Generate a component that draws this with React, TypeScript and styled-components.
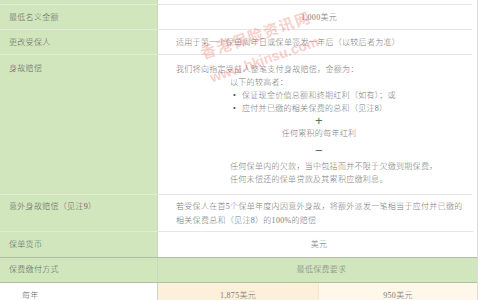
import React from "react";
import styled, { createGlobalStyle } from "styled-components";

const GREEN = "#d1e6bd";
const GREEN_LINE = "#e2ecd9";
const GREEN_DARK_LINE = "#aebfa2";
const GREY_LINE = "#e6e6e6";
const PEACH = "#fdf0da";
const PEACH_LIGHT = "#fef7ea";

const GlobalStyle = createGlobalStyle`
  html, body {
    margin: 0;
    padding: 0;
    background: #ffffff;
  }
  body {
    font-family: "Liberation Serif", "Noto Sans CJK SC", serif;
  }
`;

// Styled Components
const Sheet = styled.div`
  position: relative;
  width: 477px;
  height: 300px;
  overflow: hidden;
  border-right: 1px solid #dcdcdc;
  font-size: 8px;
  font-weight: 300;
  letter-spacing: 0.3px;
  line-height: 13px;
`;

const Row = styled.div<{ $cols?: string; $header?: boolean }>`
  display: grid;
  grid-template-columns: ${(p) => p.$cols ?? "158px 1fr"};
  background: ${(p) => (p.$header ? GREEN : "#ffffff")};
  border-top: ${(p) => (p.$header ? `1px solid ${GREEN_DARK_LINE}` : "none")};
  border-bottom: ${(p) => (p.$header ? `1px solid ${GREEN_DARK_LINE}` : "none")};
`;

const Label = styled.div<{ $pad?: string; $plain?: boolean; $noLine?: boolean; $lh?: number }>`
  box-sizing: border-box;
  background: ${(p) => (p.$plain ? "#ffffff" : GREEN)};
  color: #626262;
  padding: ${(p) => p.$pad ?? "6px 9px 5px"};
  line-height: ${(p) => p.$lh ?? 13}px;
  border-right: 1px solid #c9d9bb;
  border-bottom: ${(p) => (p.$noLine ? "none" : `1px solid ${GREEN_LINE}`)};
  white-space: nowrap;
`;

const Value = styled.div<{
  $align?: "left" | "center";
  $pad?: string;
  $noLine?: boolean;
  $lh?: number;
  $bg?: string;
  $full?: boolean;
}>`
  box-sizing: border-box;
  background: ${(p) => p.$bg ?? "#ffffff"};
  color: #7a7a7a;
  text-align: ${(p) => p.$align ?? "left"};
  padding: ${(p) => p.$pad ?? "6px 10px 5px 18px"};
  line-height: ${(p) => p.$lh ?? 13}px;
  margin-right: ${(p) => (p.$full ? 0 : 5)}px;
  border-bottom: ${(p) => (p.$noLine ? "none" : `1px solid ${GREY_LINE}`)};
  white-space: nowrap;
`;

const Line = styled.div<{ $indent?: number; $center?: boolean }>`
  padding-left: ${(p) => p.$indent ?? 0}px;
  text-align: ${(p) => (p.$center ? "center" : "left")};
`;

const Bullets = styled.ul`
  margin: 0;
  padding: 0 0 0 57px;
  list-style: none;
`;

const Bullet = styled.li`
  &::before {
    content: "•";
    display: inline-block;
    width: 9px;
    color: #444;
  }
`;

const Operator = styled.div<{ $h: number; $shift?: number }>`
  height: ${(p) => p.$h}px;
  line-height: ${(p) => p.$h}px;
  text-align: center;
  font-family: "Liberation Sans", sans-serif;
  font-size: 13px;
  color: #3f7f58;
  position: relative;
  top: ${(p) => p.$shift ?? 0}px;
`;

const Watermark = styled.div`
  position: absolute;
  left: 190px;
  top: 21px;
  width: 140px;
  height: 52px;
  transform: rotate(-19deg);
  pointer-events: none;
  color: rgba(232, 88, 76, 0.3);
  text-align: center;
  font-weight: 700;
`;

const WatermarkLine = styled.div<{ $size: number; $font: string; $spacing?: number }>`
  height: 26px;
  line-height: 26px;
  font-size: ${(p) => p.$size}px;
  font-family: ${(p) => p.$font};
  letter-spacing: ${(p) => p.$spacing ?? 0}px;
  white-space: nowrap;
`;

const App = () => {
  return (
    <>
      <GlobalStyle />
      <Sheet>
        <Row>
          <Label $pad="4px 9px 0" />
          <Value $pad="4px 0 0" />
        </Row>
        <Row>
          <Label>最低名义金额</Label>
          <Value $align="center">1,000美元</Value>
        </Row>
        <Row>
          <Label>更改受保人</Label>
          <Value>适用于第一个保单周年日或保单签发一年后（以较后者为准）</Value>
        </Row>
        <Row>
          <Label $pad="7px 9px 0">身故赔偿</Label>
          <Value $pad="8px 10px 8px 18px">
            <Line>我们将向指定受益人整笔支付身故赔偿，金额为：</Line>
            <Line $indent={54}>以下的较高者：</Line>
            <Bullets>
              <Bullet>保证现金价值总额和终期红利（如有）；或</Bullet>
              <Bullet>应付并已缴的相关保费的总和（见注8）</Bullet>
            </Bullets>
            <Operator $h={12}>+</Operator>
            <Line $center>任何累积的每年红利</Line>
            <Operator $h={20} $shift={1}>−</Operator>
            <Line $indent={54}>任何保单内的欠款，当中包括而并不限于欠缴到期保费，</Line>
            <Line $indent={54}>任何未偿还的保单贷款及其累积应缴利息。</Line>
          </Value>
        </Row>
        <Row>
          <Label $pad="5px 9px 3px" $lh={14}>
            意外身故赔偿（见注9）
          </Label>
          <Value $pad="5px 10px 3px 18px" $lh={14}>
            若受保人在首5个保单年度内因意外身故，将额外派发一笔相当于应付并已缴的
            <br />
            相关保费总和（见注8）的100%的赔偿
          </Value>
        </Row>
        <Row>
          <Label $pad="6px 9px 6px" $noLine>
            保单货币
          </Label>
          <Value $align="center" $pad="6px 10px 6px 18px" $noLine>
            美元
          </Value>
        </Row>
        <Row $header>
          <Label $pad="5px 9px 6px" $noLine>
            保费缴付方式
          </Label>
          <Value $align="center" $pad="5px 10px 6px 18px" $noLine $bg={GREEN} $full>
            最低保费要求
          </Value>
        </Row>
        <Row $cols="158px 160px 1fr">
          <Label $plain $pad="6px 9px 6px 22px" $noLine>
            每年
          </Label>
          <Value $align="center" $pad="6px 0" $noLine $bg={PEACH} $full>
            1,875美元
          </Value>
          <Value
            $align="center"
            $pad="6px 0"
            $noLine
            $bg={PEACH_LIGHT}
            $full
            style={{ borderLeft: "1px solid #f1e6d2" }}
          >
            950美元
          </Value>
        </Row>
        <Watermark>
          <WatermarkLine $size={15} $font={'"Noto Sans CJK SC", sans-serif'} $spacing={1.5}>
            香港保险资讯网
          </WatermarkLine>
          <WatermarkLine $size={14} $font={'"Liberation Sans", sans-serif'}>
            www.hkinsu.com
          </WatermarkLine>
        </Watermark>
      </Sheet>
    </>
  );
};

export default App;
